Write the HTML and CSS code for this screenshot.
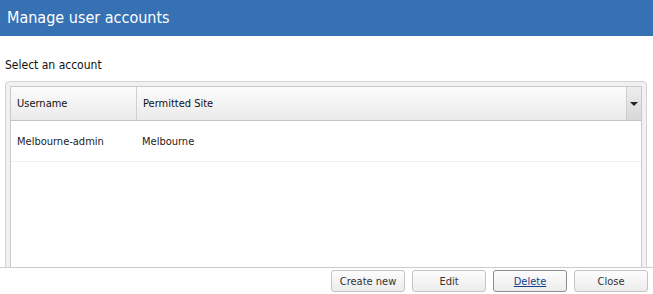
FILE: index.html
```html
<!DOCTYPE html>
<html lang="en">
<head>
    <meta charset="UTF-8">
    <title>Manage user accounts</title>
    <link rel="stylesheet" href="styles.css">
</head>
<body>
    <div class="titlebar">Manage user accounts</div>

    <div class="main">
        <div class="label">Select an account</div>
        <div class="panel">
            <div class="grid">
                <div class="grid-head">
                    <div class="col col-user">Username</div>
                    <div class="col col-site">Permitted Site</div>
                    <div class="trigger"><span class="arrow"></span></div>
                </div>
                <div class="grid-row">
                    <div class="col col-user">Melbourne-admin</div>
                    <div class="col col-site">Melbourne</div>
                </div>
            </div>
        </div>
    </div>

    <div class="toolbar">
        <button>Create new</button>
        <button>Edit</button>
        <button class="focused">Delete</button>
        <button>Close</button>
    </div>
</body>
</html>
```

FILE: styles.css
```css
body {
    margin: 0;
    width: 653px;
    height: 294px;
    overflow: hidden;
    background: #ffffff;
    font-family: 'DejaVu Sans Condensed', 'DejaVu Sans', sans-serif;
    font-size: 11px;
    color: #222222;
}

.titlebar {
    height: 36px;
    line-height: 35px;
    padding-left: 7px;
    background: #3571b3;
    color: #ffffff;
    font-size: 16px;
}

.main {
    height: 231px;
    overflow: hidden;
    padding: 0 6px 0 5px;
}

.label {
    margin-top: 22px;
    height: 23px;
    font-size: 12px;
    line-height: 14px;
    color: #111111;
}

.panel {
    height: 260px;
    border: 1px solid #d3d3d3;
    border-radius: 4px;
    background: #f1f1f1;
    padding: 4px;
}

.grid {
    height: 100%;
    border: 1px solid #c9c9c9;
    background: #ffffff;
}

.grid-head {
    display: flex;
    height: 33px;
    border-bottom: 1px solid #c5c5c5;
    background: linear-gradient(#fcfcfc, #eaeaea);
}

.grid-head .col {
    line-height: 34px;
    color: #111111;
}

.col {
    padding-left: 6px;
    box-sizing: border-box;
}

.col-user {
    width: 126px;
}

.grid-head .col-user {
    border-right: 1px solid #d0d0d0;
}

.col-site {
    flex: 1;
}

.trigger {
    width: 14px;
    border-left: 1px solid #cfcfcf;
    background: linear-gradient(#eeeeee, #d8d8d8);
    display: flex;
    justify-content: center;
    align-items: center;
}

.arrow {
    width: 0;
    height: 0;
    border-left: 4px solid transparent;
    border-right: 4px solid transparent;
    border-top: 4px solid #222222;
}

.grid-row {
    display: flex;
    height: 40px;
    line-height: 41px;
    border-bottom: 1px solid #ededed;
}

.grid-row .col-user {
    padding-left: 6px;
}

.grid-row .col-site {
    padding-left: 5px;
}

.toolbar {
    display: flex;
    justify-content: flex-end;
    gap: 7px;
    height: 26px;
    padding: 2px 5px 0 0;
    box-sizing: border-box;
    border-top: 1px solid #cccccc;
}

button {
    width: 74px;
    height: 22px;
    padding: 0;
    border: 1px solid #c4c4c4;
    border-radius: 3px;
    background: linear-gradient(#fdfdfd, #ececec);
    font-family: 'DejaVu Sans Condensed', 'DejaVu Sans', sans-serif;
    font-size: 11px;
    color: #333333;
}

button.focused {
    border-color: #8d8d8d;
    color: #15428b;
    text-decoration: underline;
}
```
